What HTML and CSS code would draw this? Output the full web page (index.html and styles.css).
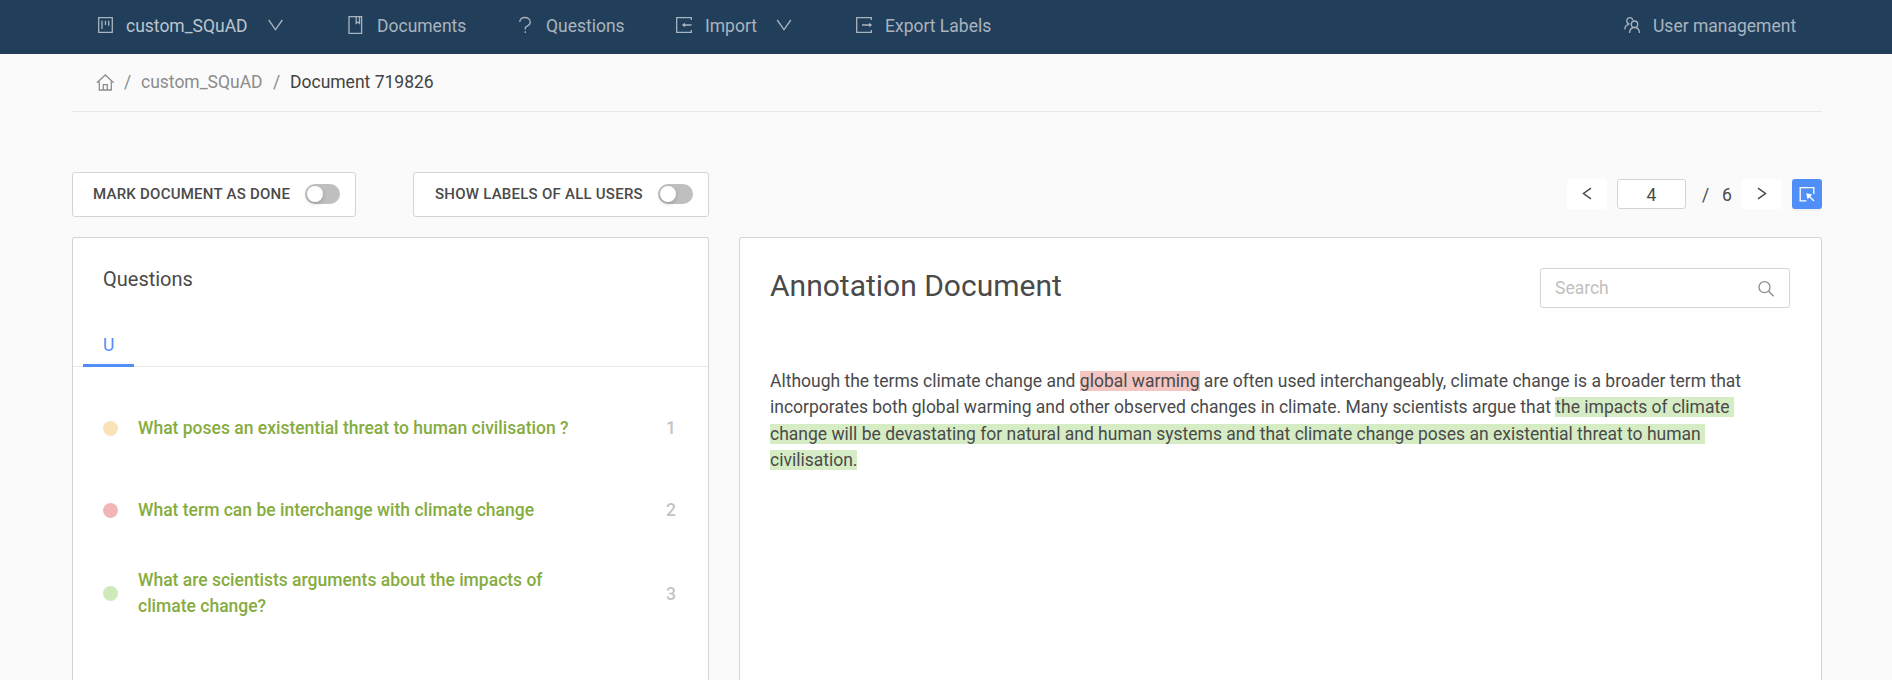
FILE: index.html
```html
<!DOCTYPE html>
<html lang="en">
<head>
<meta charset="utf-8">
<title>Annotation Document</title>
<link rel="stylesheet" href="styles.css">
</head>
<body>
<nav class="nav">
  <a class="nav-item item-project"><svg class="icon" viewBox="0 0 18 18"><path d="M2.700 1.700h13.600v14.600H2.700zM6 4.700v8.300M9.500 4.700v4.300M12.700 4.700v5"/></svg><span class="strong">custom_SQuAD</span><svg class="chev" viewBox="0 0 16 12"><path d="M.7 1l6.800 9.600L14.300 1"/></svg></a>
  <a class="nav-item item-docs"><svg class="icon" viewBox="0 0 18 18"><path d="M3 .7h12.600v16.600H3zM10.200 1v6.400l1.700-1.300 1.600 1.300V1"/></svg><span>Documents</span></a>
  <a class="nav-item item-questions"><svg class="icon" viewBox="0 0 18 18"><path d="M3.800 6C3.800 3 6 1.500 9 1.500s5.200 1.900 5.200 4.500c0 2.100-1.300 3.300-3 4.100C9.800 10.700 9.300 11 9.300 12v1.500M9.300 15.200V17"/></svg><span>Questions</span></a>
  <a class="nav-item item-import"><svg class="icon" viewBox="0 0 18 18"><path d="M16.300 4V1.600H1.700v14.800h14.600V14M16.500 9H8"/><path class="solid" d="M6.800 9l3.200-2.300v4.600z"/></svg><span>Import</span><svg class="chev" viewBox="0 0 16 12"><path d="M1.200 1l6.800 9.600L14.800 1"/></svg></a>
  <a class="nav-item item-export"><svg class="icon" viewBox="0 0 18 18"><path d="M16.300 4V1.600H1.700v14.800h14.600V14M7 9h8"/><path class="solid" d="M17.200 9L14 6.700v4.600z"/></svg><span>Export Labels</span></a>
  <a class="nav-item item-users"><svg class="icon" viewBox="0 0 18 18"><path d="M6.500 17c.2-3.400 2.200-5.500 5-5.500s4.800 2.100 5 5.500"/><circle cx="11.500" cy="8.200" r="3.200"/><path d="M9.800 4.100C9.400 2.500 8.300 1.600 6.900 1.600 5.100 1.600 3.800 3 3.800 4.700c0 1.700 1.100 3 2.700 3.300M6 8.400C3.500 8.700 2 10.700 1.800 13.400"/></svg><span>User management</span></a>
</nav>
<main class="page">
  <div class="crumbs">
    <svg class="home" viewBox="0 0 18 18"><path d="M.9 8.800L9.300 1l8.400 7.800M3.300 7.500V16h12V7.500M7.300 15.700v-5h4v5"/></svg>
    <span class="sep">/</span><span class="muted">custom_SQuAD</span><span class="sep sep2">/</span><span class="current">Document 719826</span>
  </div>
  <div class="toolbar">
    <div class="toggle toggle-done"><span>MARK DOCUMENT AS DONE</span><i class="switch"></i></div>
    <div class="toggle toggle-labels"><span>SHOW LABELS OF ALL USERS</span><i class="switch"></i></div>
    <div class="pager">
      <button class="page-btn"><svg viewBox="0 0 10 14"><path d="M9 1.200L1.500 6.500 9 11.800"/></svg></button>
      <div class="page-input">4</div>
      <span class="slash">/</span><span class="total">6</span>
      <button class="page-btn"><svg viewBox="0 0 10 14"><path d="M1 1.200l7.500 5.300L1 11.800"/></svg></button>
      <button class="select-btn"><svg viewBox="0 0 16 16"><path d="M7.500 14.800H1.200V1.700h13.600v6.300"/><path d="M15 15L9 9"/><path class="solid" d="M7.200 7.200l6 1.300-4.700 4.700z"/></svg></button>
    </div>
  </div>
  <div class="panels">
    <section class="panel questions">
      <h2>Questions</h2>
      <div class="tabs"><div class="tab">U</div></div>
      <ul class="list">
        <li class="row row1"><i class="dot yellow"></i><p>What poses an existential threat to human civilisation ?</p><b>1</b></li>
        <li class="row row2"><i class="dot red"></i><p>What term can be interchange with climate change</p><b>2</b></li>
        <li class="row row3"><i class="dot green"></i><p>What are scientists arguments about the impacts of<br>climate change?</p><b>3</b></li>
      </ul>
    </section>
    <section class="panel document">
      <header class="doc-head">
        <h1>Annotation Document</h1>
        <div class="search"><span>Search</span><svg viewBox="0 0 18 18"><circle cx="7.500" cy="7.200" r="5.500"/><path d="M11.600 11.300l5 5"/></svg></div>
      </header>
      <div class="text">Although the terms climate change and <mark class="m-red">global warming</mark> are often used interchangeably, climate change is a broader term that
incorporates both global warming and other observed changes in climate. Many scientists argue that <mark class="m-green">the impacts of climate 
change will be devastating for natural and human systems and that climate change poses an existential threat to human 
civilisation.</mark></div>
    </section>
  </div>
</main>
</body>
</html>
```
FILE: styles.css
```css
* { box-sizing: border-box; }
body {
  margin: 0;
  height: 680px;
  overflow: hidden;
  background: #fafafa;
  color: #4a4a4a;
  font: 17.5px/26.25px Roboto, sans-serif;
  display: flex;
  flex-direction: column;
}
h1, h2, p, ul { margin: 0; padding: 0; font-weight: 400; }
svg { fill: none; stroke: currentColor; stroke-width: 1.3; flex: none; }
svg .solid { fill: currentColor; stroke: none; }
button { border: 0; padding: 0; color: inherit; font: inherit; display: flex; align-items: center; justify-content: center; }

.nav {
  flex: none;
  height: 54px;
  padding: 0 0 4px 96px;
  display: flex;
  align-items: center;
  background: #213f5b;
  color: #a9b4bf;
}
.nav-item { display: flex; align-items: center; flex: none; white-space: nowrap; }
.nav-item span { margin-left: 12px; padding-top: 2px; }
.nav-item .strong { color: #bcc5cd; }
.icon { width: 18px; height: 18px; }
.chev { width: 16px; height: 12px; margin-left: auto; }
.item-project { width: 188px; }
.item-docs { width: 170px; margin-left: 62px; }
.item-docs span { margin-left: 13px; }
.item-questions { width: 159px; }
.item-import { width: 117px; }
.item-export { margin-left: 63px; width: 768px; }

.page {
  flex: 1;
  min-height: 0;
  margin: 0 70px 0 72px;
  display: flex;
  flex-direction: column;
}
.crumbs {
  flex: none;
  height: 58px;
  padding-left: 24px;
  display: flex;
  align-items: center;
  border-bottom: 1px solid #e8e8e8;
  color: #8c8c8c;
}
.home { width: 18px; height: 18px; }
.sep { width: 27px; padding-left: 10px; }
.muted { width: 122px; }
.current { color: #434343; }

.toolbar { flex: none; height: 45px; margin-top: 60px; display: flex; align-items: center; }
.toggle {
  height: 45px;
  padding: 0 15px 1px 20px;
  display: flex;
  align-items: center;
  justify-content: space-between;
  border: 1px solid #d4d4d4;
  border-radius: 3px;
  background: #fff;
  font-size: 15px;
  font-weight: 500;
  letter-spacing: .24px;
  white-space: nowrap;
}
.toggle-done { width: 284px; }
.toggle-labels { width: 296px; margin-left: 57px; padding-left: 21px; }
.switch { width: 35px; height: 20px; border-radius: 10px; background: #bfbfbf; padding: 2px; display: flex; }
.switch::before {
  content: "";
  width: 16px;
  height: 16px;
  border-radius: 50%;
  background: #fff;
  box-shadow: 0 2px 4px rgba(0, 35, 11, .2);
}
.pager { margin: 0 0 1px auto; height: 30px; display: flex; align-items: center; }
.page-btn { width: 40px; height: 30px; background: #fff; border-radius: 3px; }
.page-btn svg { width: 10px; height: 14px; stroke-width: 1.5; }
.page-input {
  width: 69px;
  height: 30px;
  margin: 0 16px 0 10px;
  border: 1px solid #d4d4d4;
  border-radius: 3px;
  background: #fff;
  text-align: center;
  line-height: 30px;
}
.slash, .total { width: 20px; padding-top: 2px; }
.select-btn { width: 30px; height: 30px; margin-left: 10px; border-radius: 3px; background: #4f8ff7; color: #fff; box-shadow: 0 2px 0 rgba(0, 0, 0, .04); }
.select-btn svg { width: 16px; height: 16px; }

.panels { flex: 1; min-height: 0; margin-top: 20px; display: flex; gap: 30px; }
.panel { background: #fff; border: 1px solid #d4d4d4; border-bottom: 0; border-radius: 3px 3px 0 0; }
.questions { width: 637px; flex: none; }
.document { flex: 1; padding: 30px 31px 0 30px; }
.questions h2 { padding: 27px 30px 1px; font-size: 20px; line-height: 28px; }
.tabs { height: 54px; margin-top: 19px; padding-left: 10px; border-bottom: 1px solid #e8e8e8; display: flex; }
.tab { width: 51px; height: 54px; padding: 19px 20px 0; color: #4f8ff7; border-bottom: 3px solid #4f8ff7; }
.list { list-style: none; }
.row { display: flex; align-items: center; padding: 0 32px 0 30px; color: #86ac40; font-weight: 500; }
.row1 { margin-top: 48px; }
.row2 { margin-top: 56px; }
.row3 { margin-top: 43px; }
.row3 p { padding-bottom: 2px; }
.dot { width: 15px; height: 15px; border-radius: 50%; margin-right: 20px; }
.row p { flex: 1; font-weight: 500; }
.row b { font-weight: 500; color: #c4c4c4; }
.yellow { background: #f9e2b8; }
.red { background: #f2b6b6; }
.green { background: #ceeabb; }

.doc-head { display: flex; justify-content: space-between; }
.doc-head h1 { font-size: 30px; line-height: 36px; }
.search {
  width: 250px;
  height: 40px;
  padding: 1px 14px 0;
  display: flex;
  align-items: center;
  justify-content: space-between;
  border: 1px solid #d4d4d4;
  border-radius: 3px;
  color: #bfbfbf;
}
.search svg { width: 18px; height: 18px; color: #8c8c8c; }
.text { margin-top: 60px; white-space: pre-wrap; width: 1000px; }
mark { color: inherit; }
.m-red { background: #f5c5c2; }
.m-green { background: #d6ecc5; }
```
